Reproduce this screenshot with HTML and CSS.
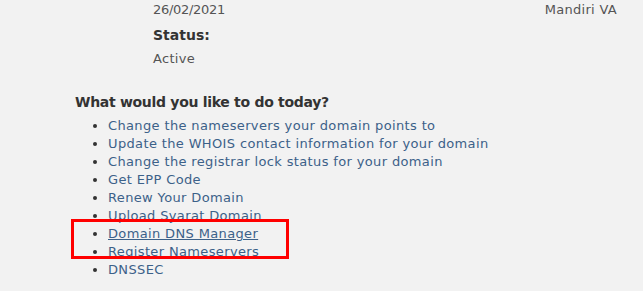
FILE: index.html
```html
<!DOCTYPE html>
<html>
<head>
<meta charset="utf-8">
<link rel="stylesheet" href="styles.css">
</head>
<body>
<div class="page">
  <div class="row">
    <div class="col-left">
      <div class="date">26/02/2021</div>
      <div class="label">Status:</div>
      <div class="value">Active</div>
    </div>
    <div class="col-right">Mandiri VA</div>
  </div>
  <h3 class="heading">What would you like to do today?</h3>
  <ul class="actions">
    <li><a href="#">Change the nameservers your domain points to</a></li>
    <li><a href="#">Update the WHOIS contact information for your domain</a></li>
    <li><a href="#">Change the registrar lock status for your domain</a></li>
    <li><a href="#">Get EPP Code</a></li>
    <li><a href="#">Renew Your Domain</a></li>
    <li><a href="#">Upload Syarat Domain</a></li>
    <li class="hl"><a href="#" class="under">Domain DNS Manager</a><span class="box"></span></li>
    <li><a href="#">Register Nameservers</a></li>
    <li><a href="#">DNSSEC</a></li>
  </ul>
</div>
</body>
</html>
```
FILE: styles.css
```css
html, body {
  margin: 0;
  padding: 0;
  background: #f2f2f2;
}
body {
  font-family: "DejaVu Sans", "Liberation Sans", sans-serif;
  font-size: 13px;
  color: #555;
}
.page {
  width: 643px;
  height: 291px;
  overflow: hidden;
  position: relative;
}
.row {
  display: flex;
  justify-content: space-between;
  padding: 0 26px 0 153px;
  margin-top: 1px;
}
.date, .value, .col-right {
  line-height: 18px;
  color: #555;
}
.date {
  letter-spacing: -0.3px;
}
.col-right {
  letter-spacing: 0.3px;
}
.label {
  font-weight: bold;
  font-size: 14px;
  color: #333;
  line-height: 18px;
  margin-top: 7px;
}
.value {
  margin-top: 6px;
  letter-spacing: 0.3px;
}
.heading {
  margin: 24px 0 0 75px;
  font-size: 14px;
  font-weight: bold;
  color: #333;
  line-height: 20px;
  letter-spacing: -0.3px;
}
.actions {
  margin: 5px 0 0 0;
  padding: 0 0 0 108px;
  line-height: 18px;
  color: #333;
}
.actions a {
  color: #3c6189;
  text-decoration: none;
  letter-spacing: 0.36px;
}
.actions a.under {
  text-decoration: underline;
}
.hl {
  position: relative;
}
.box {
  position: absolute;
  left: -37px;
  top: -6px;
  width: 212px;
  height: 34px;
  border: 3px solid #ff0000;
  pointer-events: none;
}
```
